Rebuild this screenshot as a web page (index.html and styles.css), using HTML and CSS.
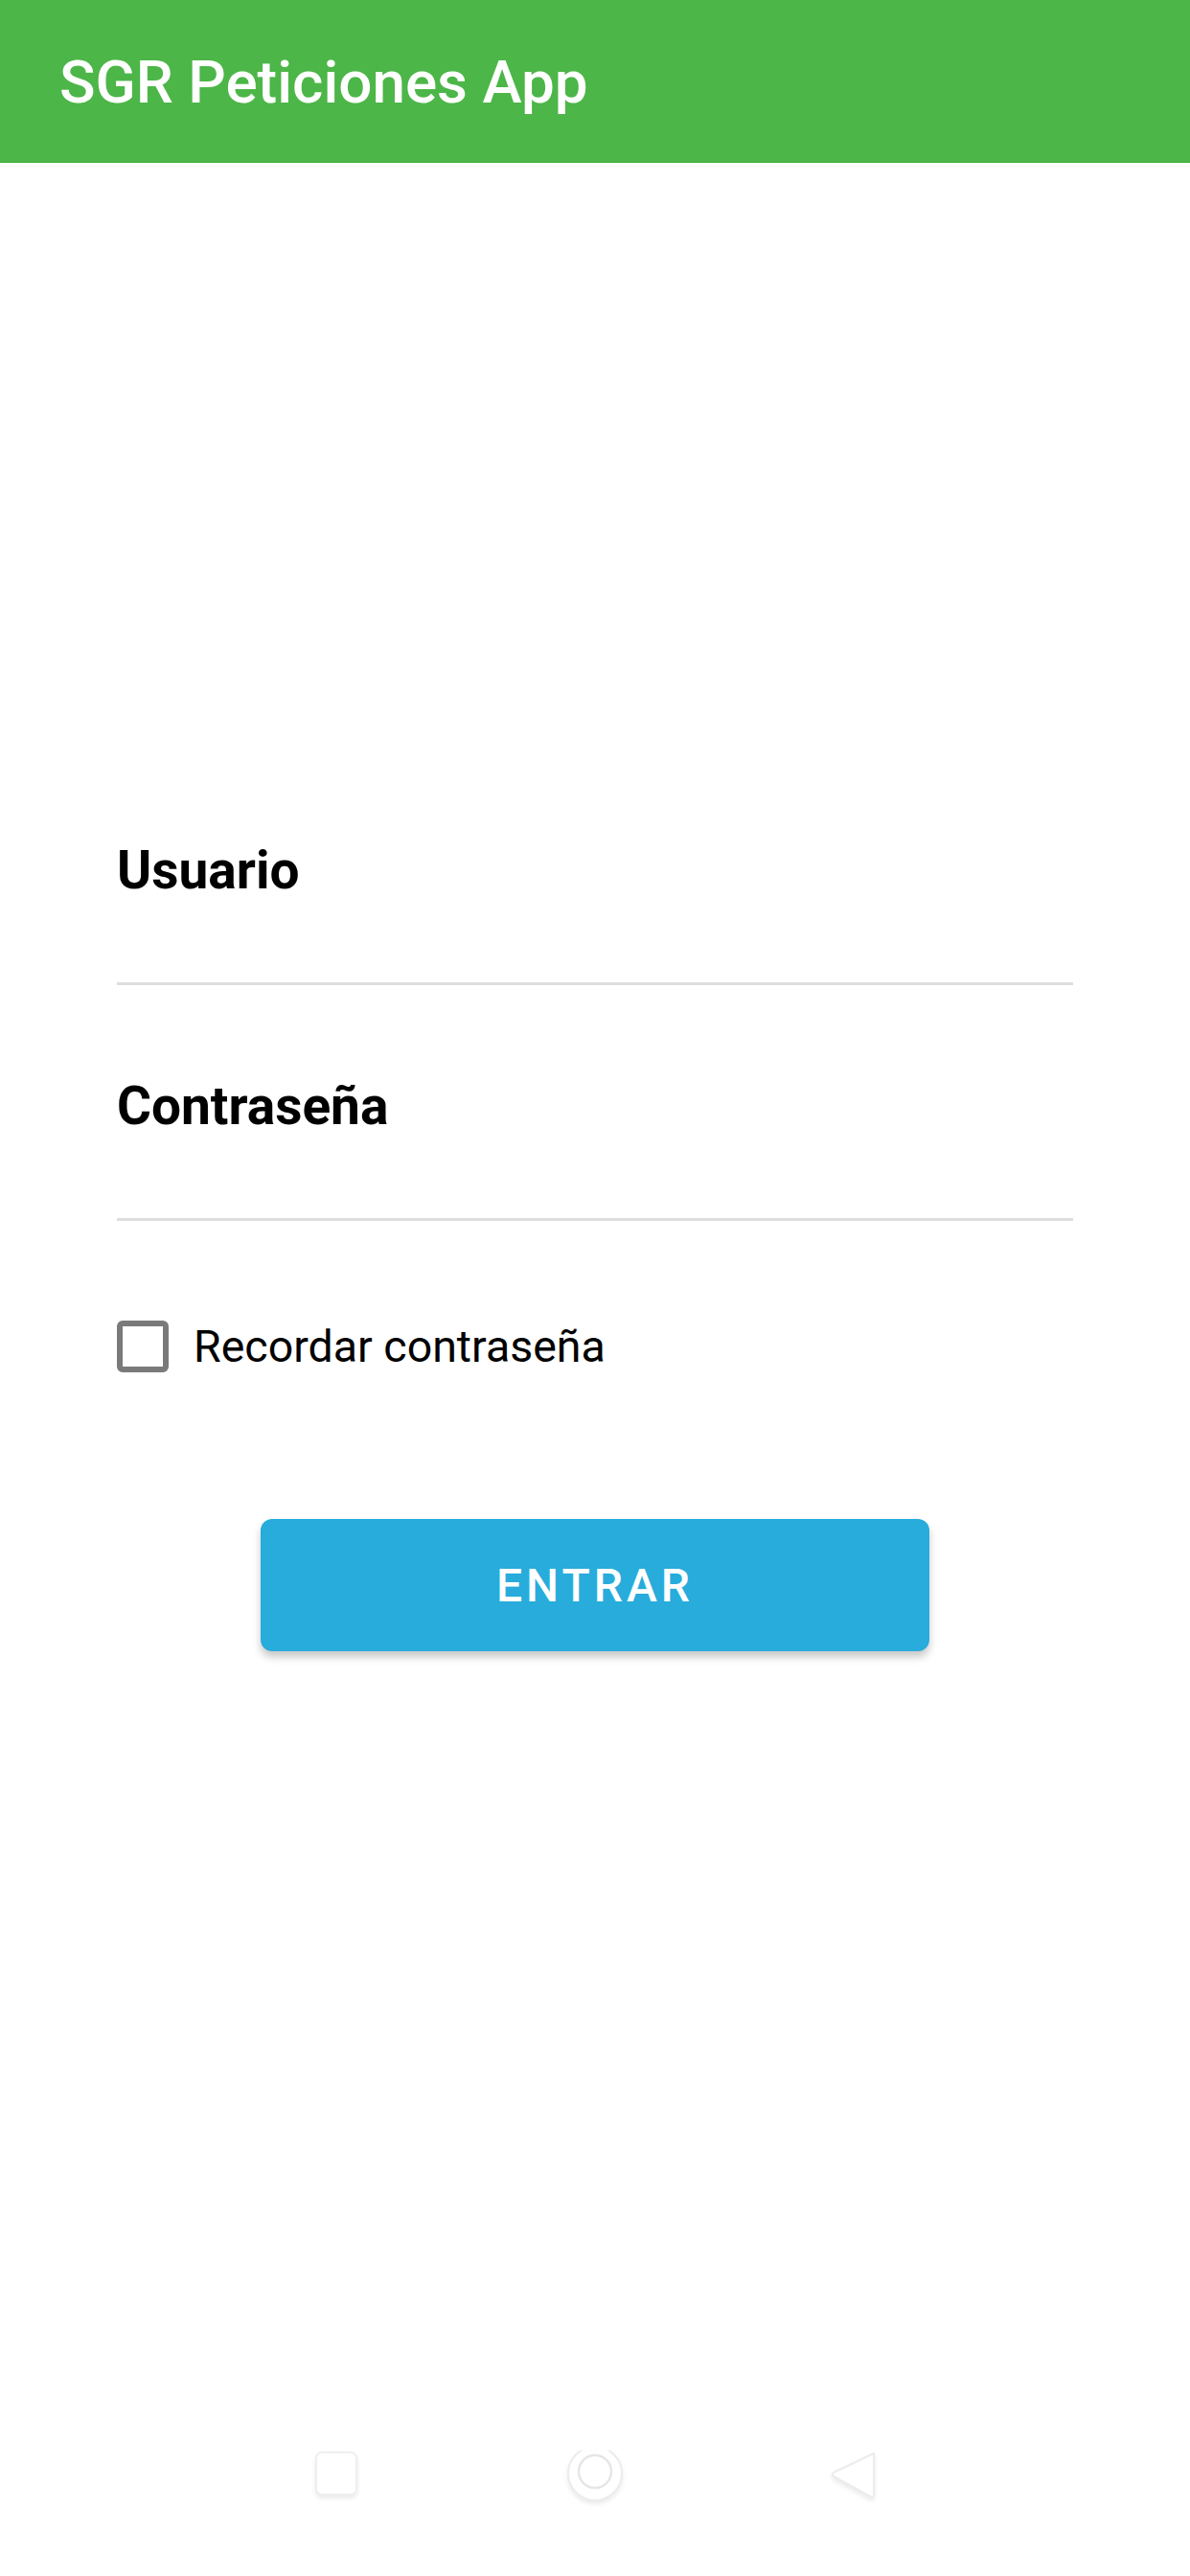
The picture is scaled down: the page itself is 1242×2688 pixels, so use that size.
FILE: index.html
```html
<!DOCTYPE html>
<html lang="es">
<head>
    <meta charset="UTF-8">
    <meta name="viewport" content="width=device-width, initial-scale=1.0">
    <title>SGR Peticiones App</title>
    <link rel="stylesheet" href="styles.css">
</head>
<body>
    <header class="app-bar">
        <h1>SGR Peticiones App</h1>
    </header>

    <main class="login">
        <div class="field">
            <label for="usuario">Usuario</label>
            <input type="text" id="usuario">
        </div>
        <div class="field">
            <label for="password">Contraseña</label>
            <input type="password" id="password">
        </div>
        <label class="remember">
            <span class="check"></span>
            Recordar contraseña
        </label>
        <button class="btn-entrar">ENTRAR</button>
    </main>

    <nav class="nav-bar">
        <svg class="nav-icon" width="60" height="60" viewBox="0 0 60 60">
            <rect x="9" y="2" width="42" height="44" rx="6" fill="#fff" stroke="#efefef" stroke-width="2"/>
        </svg>
        <svg class="nav-icon" width="60" height="60" viewBox="0 0 60 60">
            <circle cx="30" cy="24" r="28" fill="#fff" stroke="#ececec" stroke-width="2"/>
            <circle cx="30" cy="22" r="17" fill="#fff" stroke="#e6e6e6" stroke-width="2.5"/>
        </svg>
        <svg class="nav-icon" width="60" height="60" viewBox="0 0 60 60">
            <path d="M51 3 L51 46 Q51 50 47 48 L9 27 Q6 25 9 23 Z" fill="#fff" stroke="#ececec" stroke-width="2" stroke-linejoin="round"/>
        </svg>
    </nav>
</body>
</html>
```

FILE: styles.css
```css
html, body {
    margin: 0;
    padding: 0;
}

body {
    font-family: Roboto, "Noto Sans", Arial, sans-serif;
    background: #ffffff;
    color: #000;
    min-height: 100vh;
    display: flex;
    flex-direction: column;
}

.app-bar {
    height: 170px;
    background-color: #4cb648;
    display: flex;
    align-items: center;
    padding-left: 62px;
    box-sizing: border-box;
}

.app-bar h1 {
    margin: 0;
    font-size: 62px;
    font-weight: 500;
    color: #fff;
}

.login {
    margin: 0 122px;
    padding-top: 705px;
    display: flex;
    flex-direction: column;
}

.field {
    display: flex;
    flex-direction: column;
    margin-bottom: 93px;
}

.field label {
    font-size: 55px;
    line-height: 66px;
    font-weight: 700;
}

.field input {
    height: 84px;
    border: none;
    border-bottom: 3px solid #dedede;
    outline: none;
    padding: 0;
    font-size: 48px;
    font-family: inherit;
    background: transparent;
}

.remember {
    display: flex;
    align-items: center;
    gap: 26px;
    font-size: 46.5px;
    line-height: 54px;
    margin-top: 11px;
}

.check {
    width: 54px;
    height: 54px;
    border: 6px solid #7a7a7a;
    border-radius: 6px;
    box-sizing: border-box;
}

.btn-entrar {
    align-self: center;
    margin-top: 153px;
    width: 698px;
    height: 138px;
    border: none;
    border-radius: 12px;
    background-color: #27acdc;
    color: #fff;
    font-family: inherit;
    font-size: 48px;
    font-weight: 500;
    letter-spacing: 4px;
    box-shadow: 0 6px 8px rgba(0, 0, 0, 0.22);
    cursor: pointer;
}

.nav-bar {
    margin-top: auto;
    height: 131px;
    display: flex;
    justify-content: center;
    align-items: flex-start;
    gap: 210px;
}

.nav-icon {
    filter: drop-shadow(0 3px 2px rgba(0, 0, 0, 0.08));
}
```
